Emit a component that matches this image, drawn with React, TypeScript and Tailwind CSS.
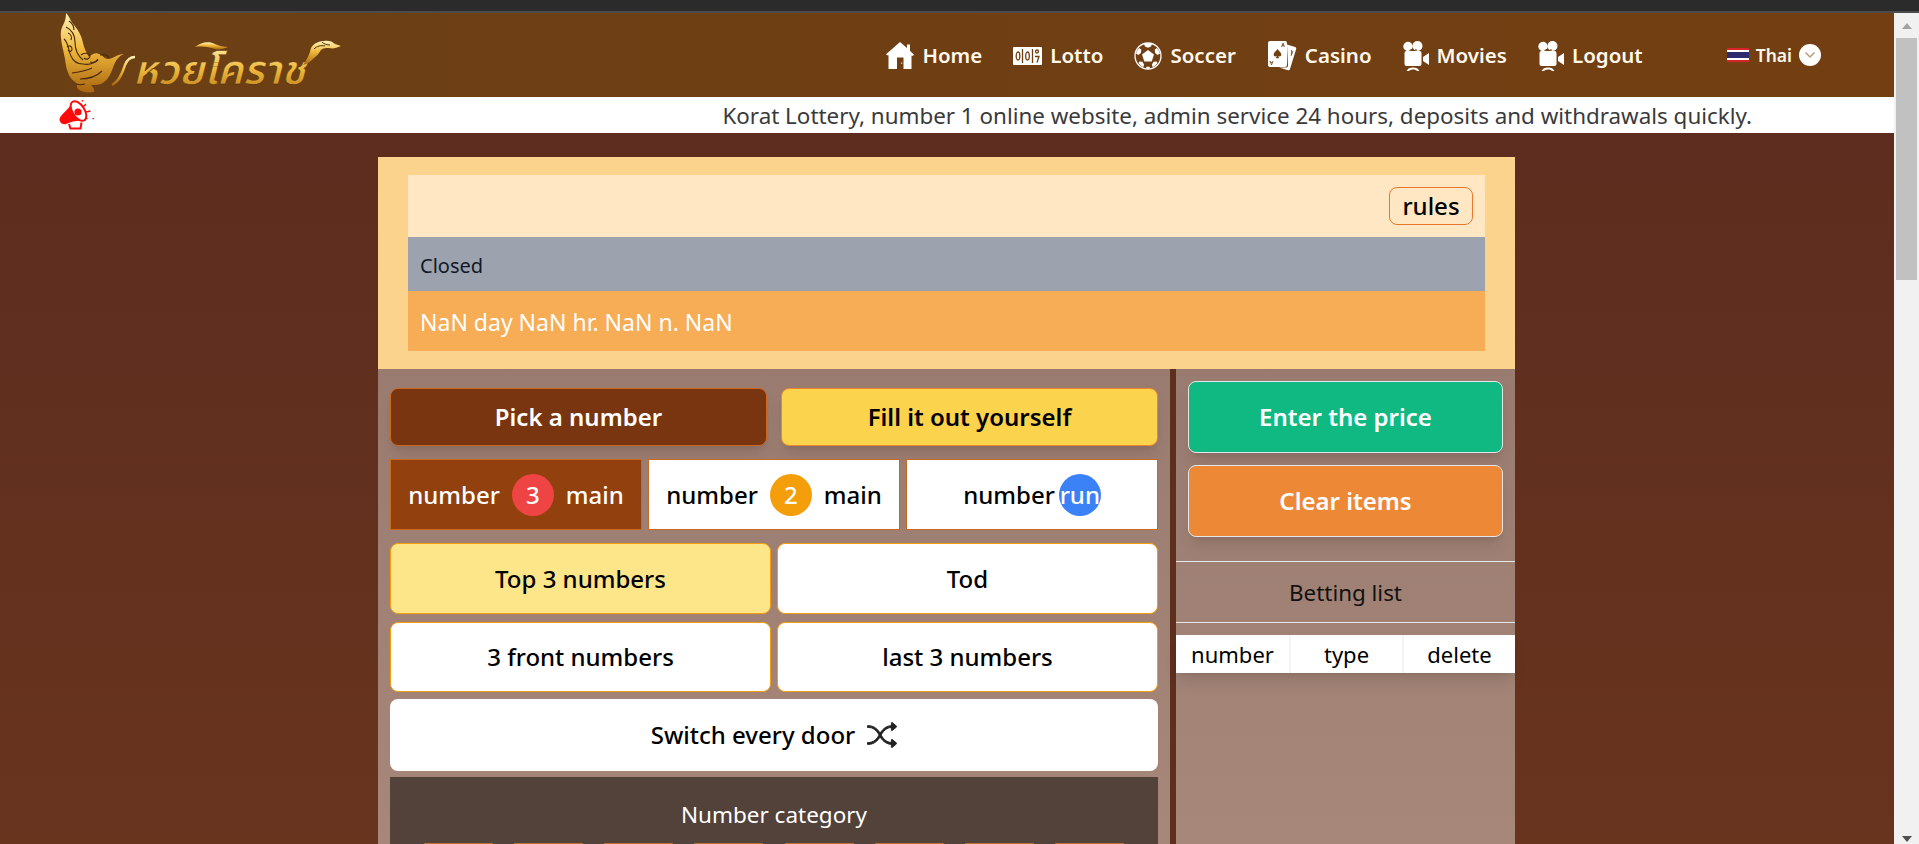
import { BsShuffle } from 'react-icons/bs';

function Logo() {
  return (
    <svg width="300" height="84" viewBox="0 0 300 84" className="shrink-0 overflow-visible">
      <defs>
        <linearGradient id="gold" x1="0" y1="0" x2="0" y2="1">
          <stop offset="0" stopColor="#fff3b8" />
          <stop offset="0.45" stopColor="#f0b93c" />
          <stop offset="1" stopColor="#a8650f" />
        </linearGradient>
      </defs>
      {/* naga head */}
      <path
        fill="url(#gold)"
        d="M6 0c4 4 4 8 8 12 5 6 8 12 9 18 1 5 3 9 6 14 3-3 7-5 10-3 4 1 5 5 9 5 5 0 9-5 16-5-5 2-8 6-10 11-3 8-5 15-13 19-3 1-7 1-10 1 2 2 4 5 3 7-6 1-13 0-16-3-2-3 0-5-3-7C8 64 6 55 5 46 3 35 0 26 1 18c1-6 5-8 5-18z"
      />
      <g fill="none" stroke="#4a2a0c" strokeWidth="1.100">
        <path d="M6 14c6 3 9 9 9 15 0 8 3 14 8 18M4 26c5 4 4 12 7 17 2 5 6 8 12 8 6 1 12-1 15-5" />
        <path d="M12 60c7-1 14-2 20-5M20 66c8 0 16-2 22-8M21 42c3-3 8-2 9 1 0 3-4 4-6 2" />
        <path d="M9 8c3 2 5 5 5 9M40 42c4-1 8 0 9 3M8 20c3 1 4 4 3 7M7 34c2-2 5-1 5 2s-3 3-4 1M16 71c3 1 6 1 9 0M30 49c3 1 6 0 8-2" />
      </g>
      <path fill="none" stroke="url(#gold)" strokeWidth="2.500" d="M52 72c8-4 11-14 13-20 2-5 5-8 10-8" />
      {/* logo lettering */}
      <text
        x="73"
        y="71"
        textLength="172"
        lengthAdjust="spacingAndGlyphs"
        fontFamily="'Noto Sans Thai','Noto Sans',sans-serif"
        fontSize="40"
        fontWeight="600"
        fontStyle="italic"
        fill="url(#gold)"
        stroke="#3e2208"
        strokeWidth="0.4"
      >
        หวยโคราช
      </text>
      {/* swoosh above the lettering */}
      <path fill="url(#gold)" d="M135 34c6-5 14-6 20-3 4 2 8 3 13 3-5 2-9 3-13 2-6-2-12-3-20-2z" />
      {/* right flourish */}
      <path fill="url(#gold)" d="M243 52c4-6 7-11 8-17 3-5 8-7 13-7 4-1 8 0 11 3 2 1 4 1 6 2-5 2-8 3-12 2-3 0-6 0-8 2-2 3-4 6-7 8-3 3-6 6-11 7z" />
      <path fill="none" stroke="#4a2a0c" strokeWidth="1" d="M254 36c3-3 7-4 11-3M262 29c2 2 5 3 8 3" />
    </svg>
  );
}

function HomeIcon() {
  return (
    <svg width="28" height="28" viewBox="0 0 28 28">
      <path fill="#fff" fillRule="evenodd" d="M14 0l7 6V2.500h3v6.300l4 3.900-1 1h-1.500V27h-23V13.200H1l-1-1zM11 15.500V27h6.500V15.500zM15.200 20.500h1v1.200h-1z" />
    </svg>
  );
}

function LottoIcon() {
  return (
    <svg width="29" height="18" viewBox="0 0 29 18">
      <rect width="29" height="18" rx="1" fill="#fff" />
      <g fill="none" stroke="#6f3f13" strokeWidth="1.300">
        <path d="M9.500 2v14M19.500 2v14" />
        <ellipse cx="5" cy="9" rx="1.800" ry="4" />
        <ellipse cx="14.500" cy="9" rx="1.800" ry="4" />
        <circle cx="24" cy="4.500" r="1.500" />
        <path d="M22 9.500h4l-2 6" />
      </g>
    </svg>
  );
}

function BallIcon() {
  return (
    <svg width="28" height="28" viewBox="0 0 28 28">
      <circle cx="14" cy="14" r="13" fill="none" stroke="#fff" strokeWidth="1.300" />
      <g fill="#fff">
        <path d="M14 8l6 4.400-2.300 7h-7.400l-2.300-7z" />
        <path d="M10 2c2.600-.6 5.400-.6 8 0l-1 2.600-3 1.200-3-1.200zM2 11.500c.5-2 1.700-4 3.300-5.500l2 1.800-.4 3.200-2.500 2zM26 11.500c-.5-2-1.700-4-3.300-5.500l-2 1.800.4 3.200 2.500 2zM4.500 21c1.300 1.800 2.800 3.200 4.800 4.200l.8-2.600-1.700-2.800-2.900-.3zM23.500 21c-1.300 1.800-2.800 3.200-4.800 4.200l-.8-2.600 1.700-2.800 2.900-.3zM11.500 26.600h5l-1.200-1.800h-2.600z" />
      </g>
    </svg>
  );
}

function CardsIcon() {
  return (
    <svg width="30" height="30" viewBox="0 0 30 30">
      <path fill="#fff" d="M20 3.500l8 2.500c1 .3 1.500 1 1.200 2L23 28c-.3 1-1 1.500-2 1.200l-9-2.700h7c1.500 0 2-.7 2-2z" />
      <rect x="1" y="0" width="19" height="26" rx="2" fill="#fff" />
      <path fill="#6f3f13" d="M10.500 8c2 2.500 3.800 3.800 3.800 5.700 0 1.700-2 2.300-3 1 .1 1.200.5 2 1 2.500H8.700c.5-.5.900-1.300 1-2.500-1 1.300-3 .7-3-1C6.700 11.800 8.500 10.500 10.500 8z" />
      <path fill="none" stroke="#6f3f13" strokeWidth="0.800" d="M14.500 6l1.500-4 1.500 4M15 4.700h2M3 20l1.500 4L6 20M3.500 21.300h2M24.500 9l-.2 4.500M26 10l-2 5" />
    </svg>
  );
}

function CameraIcon() {
  return (
    <svg width="26" height="30" viewBox="0 0 26 30">
      <g fill="#fff">
        <circle cx="5" cy="5.500" r="4.700" />
        <circle cx="14.500" cy="5" r="5" />
        <rect x="1.500" y="10" width="17" height="15" rx="2" />
        <path d="M20 16l6-4v12l-6-4z" />
        <path d="M5.500 27.500c3-1.500 6-1.500 9 0l2 2.500h-2.500c-1-1-1.800-1.500-3.500-1.500S7 29 6 30H3.500z" />
      </g>
      <path fill="#6f3f13" d="M5.500 9.500l3-1.500 1.500 1.500zM11 9.500L13 8l1.500 1.500z" />
    </svg>
  );
}

function Megaphone() {
  return (
    <svg width="36" height="30" viewBox="0 0 36 30">
      <path fill="#ff0a0a" d="M14 1C11 8 6 11 2 16c-2 2-2 5 0 7 1 1 3 1.500 5 1 6-3 12-4 20-3L14 1z" />
      <ellipse cx="19.500" cy="11" rx="6" ry="11" transform="rotate(-33 19.500 11)" fill="#fff" stroke="#ff0a0a" strokeWidth="2" />
      <circle cx="19" cy="12" r="3.600" fill="#ff0a0a" />
      <path fill="none" stroke="#ff0a0a" strokeWidth="2" d="M10 24l1.500 4.500h10l1-6" />
      <path fill="none" stroke="#ff0a0a" strokeWidth="1.300" d="M24 7l3-3M27 12l4.500-1M23 1.500l1-1.500M27 18l1.500 1" />
      <rect x="33.500" y="18" width="1.500" height="1.200" fill="#ff0a0a" />
    </svg>
  );
}

function NavItem({ icon, label }: { icon: React.ReactNode; label: string }) {
  return (
    <a className="flex items-center gap-2 pt-[1px] text-[20.5px] font-semibold text-[#fff8ec]">
      <span className="flex h-[30px] items-center">{icon}</span>
      {label}
    </a>
  );
}

function Tab({ badge, badgeBg, suffix, active }: { badge: string; badgeBg: string; suffix?: string; active?: boolean }) {
  return (
    <button className={`flex h-[71px] items-center justify-center border border-[#c9691f] text-[24px] font-medium ${active ? 'bg-[#92400e] text-white' : 'bg-white text-black'} ${suffix ? 'gap-3' : 'gap-1'}`}>
      number
      <span className={`flex h-[42px] w-[42px] items-center justify-center rounded-full text-white ${badgeBg}`}>{badge}</span>
      {suffix}
    </button>
  );
}

export default function App() {
  const categories = [1, 2, 3, 4, 5, 6, 7, 8];

  return (
    <div className="flex h-[844px] flex-col overflow-hidden bg-[#2b2b2b] font-['Noto_Sans','Noto_Sans_Thai',sans-serif]">
      <div className="h-[11px] shrink-0" />
      <div className="h-[2px] shrink-0 bg-[#4c4c4c]" />

      <div className="flex min-h-0 flex-1">
        <div className="flex min-w-0 flex-1 flex-col bg-linear-to-b from-[#5b2b1e] to-[#68341e]">
          {/* header */}
          <header className="flex h-[84px] shrink-0 items-center bg-linear-to-r from-[#6b3f14] to-[#733f12] pl-[60px] pr-[73px]">
            <Logo />
            <nav className="ml-auto flex items-center gap-[31px]">
              <NavItem icon={<HomeIcon />} label="Home" />
              <NavItem icon={<LottoIcon />} label="Lotto" />
              <NavItem icon={<BallIcon />} label="Soccer" />
              <NavItem icon={<CardsIcon />} label="Casino" />
              <NavItem icon={<CameraIcon />} label="Movies" />
              <NavItem icon={<CameraIcon />} label="Logout" />
            </nav>
            <div className="ml-[84px] flex items-center">
              <div className="flex h-[14px] w-[22px] flex-col">
                <div className="h-[2px] bg-[#d8232a]" />
                <div className="h-[2px] bg-white" />
                <div className="h-[6px] bg-[#2d2a6e]" />
                <div className="h-[2px] bg-white" />
                <div className="h-[2px] bg-[#d8232a]" />
              </div>
              <span className="ml-[7px] text-[17.5px] font-semibold text-[#fff8ec]">Thai</span>
              <span className="ml-[7px] flex h-[22px] w-[22px] items-center justify-center rounded-full bg-white">
                <svg width="12" height="8" viewBox="0 0 12 8">
                  <path d="M1.500 1.500L6 6l4.500-4.500" fill="none" stroke="#b99a78" strokeWidth="1.500" />
                </svg>
              </span>
            </div>
          </header>

          {/* ticker */}
          <div className="flex h-9 shrink-0 items-center bg-white pl-[59px] pr-[142px]">
            <Megaphone />
            <p className="ml-auto whitespace-nowrap pt-[2px] text-[22.4px] text-[#3a3a3a]">
              Korat Lottery, number 1 online website, admin service 24 hours, deposits and withdrawals quickly.
            </p>
          </div>

          {/* panel */}
          <main className="ml-[378px] mt-6 w-[1137px]">
            <section className="bg-[#fcd38d] px-[30px] py-[18px]">
              <div className="flex h-[62px] items-center justify-end bg-[#ffe7c3] pr-3">
                <button className="h-[38px] w-[84px] rounded-lg border border-[#e8772e] text-[24px] font-medium leading-none text-black">rules</button>
              </div>
              <div className="flex h-[54px] items-center bg-[#9ca3af] px-3 pt-[3px] text-[20px] text-[#111827]">Closed</div>
              <div className="flex h-[60px] items-center bg-[#f6ad55] px-3 pt-[2px] text-[23px] text-white">NaN day NaN hr. NaN n. NaN</div>
            </section>

            <section className="flex bg-linear-to-b from-[#9a7b70] to-[#a68779]">
              {/* left column */}
              <div className="h-[475px] w-[792px] shrink-0 px-3 pt-[19px]">
                <div className="grid grid-cols-2 gap-[14px]">
                  <button className="h-[58px] rounded-lg border border-[#c9691f] bg-[#78350f] text-[24px] font-semibold text-white shadow-lg">Pick a number</button>
                  <button className="h-[58px] rounded-lg border border-[#e8872e] bg-[#fcd34d] text-[24px] font-semibold text-black shadow-lg">Fill it out yourself</button>
                </div>

                <div className="mt-[13px] grid grid-cols-3 gap-[6px]">
                  <Tab badge="3" badgeBg="bg-[#ef4444]" suffix="main" active />
                  <Tab badge="2" badgeBg="bg-[#f59e0b]" suffix="main" />
                  <Tab badge="run" badgeBg="bg-[#3b82f6]" />
                </div>

                <div className="mt-[13px] grid grid-cols-2 gap-x-[6px] gap-y-2">
                  <button className="h-[71px] rounded-lg border border-[#f59e0b] bg-[#fde68a] text-[24px] font-medium text-black">Top 3 numbers</button>
                  <button className="h-[71px] rounded-lg border border-[#f59e0b] bg-white text-[24px] font-medium text-black">Tod</button>
                  <button className="h-[70px] rounded-lg border border-[#f59e0b] bg-white text-[24px] font-medium text-black">3 front numbers</button>
                  <button className="h-[70px] rounded-lg border border-[#f59e0b] bg-white text-[24px] font-medium text-black">last 3 numbers</button>
                </div>

                <button className="mt-[7px] flex h-[72px] w-full items-center justify-center gap-3 rounded-lg bg-white text-[24px] font-medium text-black">
                  Switch every door
                  <BsShuffle className="h-[30px] w-[30px] text-[#222]" stroke="currentColor" strokeWidth="0.5" />
                </button>

                <div className="mt-[6px] h-[100px] bg-[#524239]">
                  <h3 className="flex h-[66px] items-center justify-center pt-[10px] text-[22.5px] text-white">Number category</h3>
                  <div className="flex justify-between px-8">
                    {categories.map(c => (
                      <div key={c} className="h-8 w-[73px] rounded-sm border border-[#c0702f] bg-white" />
                    ))}
                  </div>
                </div>
              </div>

              {/* right column */}
              <aside className="flex-1 border-l-[6px] border-[#5f2f1e]">
                <div className="flex flex-col gap-3 px-3 pt-3">
                  <button className="h-[72px] rounded-lg border border-[#e5e7eb] bg-[#10b981] text-[24px] font-semibold text-white shadow-lg">Enter the price</button>
                  <button className="h-[72px] rounded-lg border border-[#e5e7eb] bg-[#ed8936] text-[24px] font-semibold text-white shadow-lg">Clear items</button>
                </div>
                <h3 className="mt-6 flex h-[62px] items-center justify-center border-y border-[#e5e7eb] pt-[2px] text-[22.4px] text-[#111]">Betting list</h3>
                <div className="mt-3 grid h-[38px] grid-cols-3 bg-white text-[22px] text-black shadow-lg">
                  <div className="flex items-center justify-center">number</div>
                  <div className="flex items-center justify-center border-l-2 border-[#f3f4f6] pt-[1px]">type</div>
                  <div className="flex items-center justify-center border-l-2 border-[#f3f4f6] pt-[1px]">delete</div>
                </div>
              </aside>
            </section>
          </main>
        </div>

        {/* browser scrollbar */}
        <div className="flex w-[25px] shrink-0 flex-col items-center bg-[#f1f1f1]">
          <div className="mt-[10px] h-0 w-0 border-x-[5.5px] border-b-[6px] border-x-transparent border-b-[#a3a3a3]" />
          <div className="mt-[9px] h-[242px] w-[21px] bg-[#c1c1c1]" />
          <div className="mt-auto mb-[2px] h-0 w-0 border-x-[5.5px] border-t-[6px] border-x-transparent border-t-[#505050]" />
        </div>
      </div>
    </div>
  );
}
